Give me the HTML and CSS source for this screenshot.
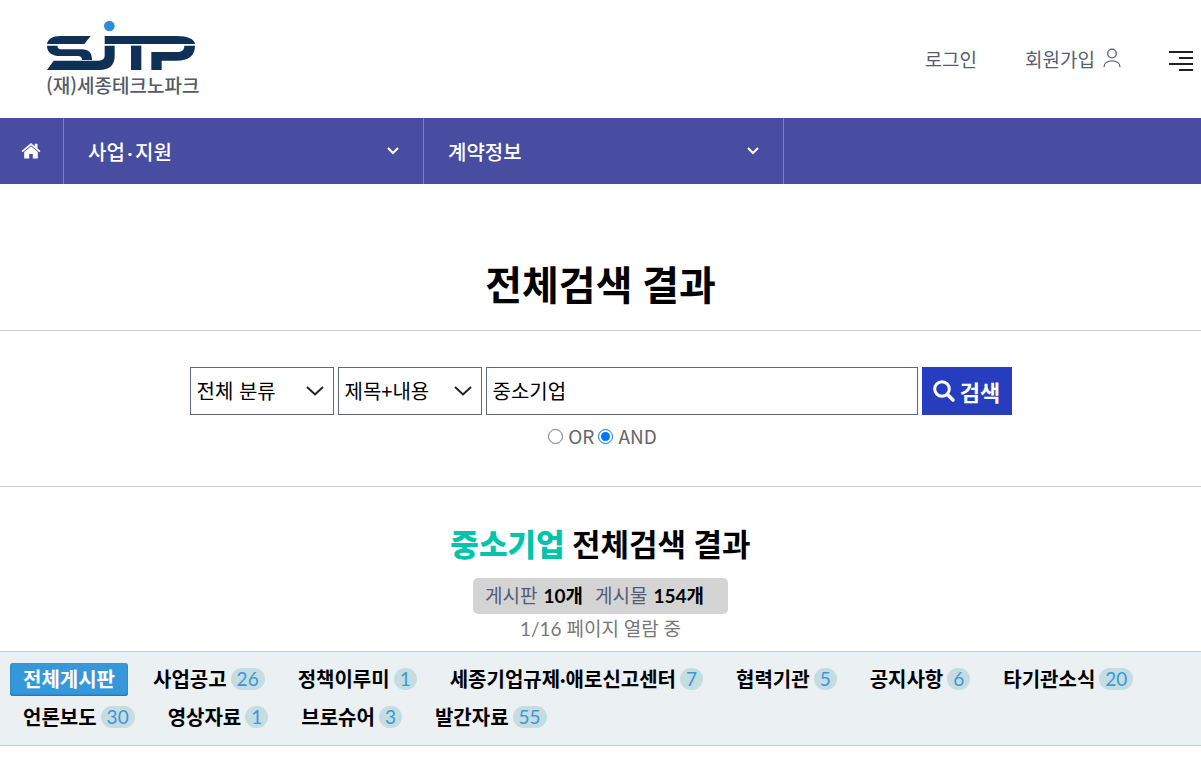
FILE: index.html
```html
<!DOCTYPE html>
<html lang="ko">
  <head>
    <meta charset="UTF-8" />
    <meta name="viewport" content="width=device-width, initial-scale=1.0" />
    <title>전체검색 결과</title>
    <link rel="stylesheet" href="styles.css">
  </head>
  <body>
    <header class="header">
      <a href="#" class="logo">
        <svg class="logo_mark" viewBox="48 30 450 150" aria-hidden="true">
          <circle cx="238" cy="48" r="16" fill="#2a8fd4" />
          <g fill="#0f3057">
            <path d="M182 78H90C68 78 53 87 51 102H163Z" />
            <path d="M51 107H82C82 114 87 118 96 118H155C176 118 186 128 186 150H156C156 142 152 138 144 138H92C66 138 51 127 51 107Z" />
            <path d="M224 78H440C474 78 493 87 495 102H224Z" />
            <path d="M224 107H254V138C254 166 238 180 208 180H51L71 152H205C218 152 224 147 224 136Z" />
            <path d="M303 107H334V180H303Z" />
            <path d="M463 107H495C495 137 475 152 440 152H395V180H364V126H440C456 126 463 120 463 107Z" />
          </g>
        </svg>
        <span class="logo_text">(재)세종테크노파크</span>
      </a>
      <div class="util">
        <a href="#">로그인</a>
        <a href="#" class="join">
          회원가입
          <svg width="18" height="20" viewBox="0 0 18 20" fill="none" stroke="#555e70" stroke-width="1.3" aria-hidden="true">
            <circle cx="9" cy="5.5" r="4.3" />
            <path d="M1 19C1 15 4.5 12.800 9 12.800S17 15 17 19" />
          </svg>
        </a>
        <button type="button" class="menu_btn" aria-label="전체메뉴">
          <svg width="24" height="22" viewBox="0 0 24 22" stroke="#222" stroke-width="2" aria-hidden="true">
            <path d="M0 2H24M10 8H24M0 14H24M10 20H24" />
          </svg>
        </button>
      </div>
    </header>

    <nav class="gnb">
      <a href="#" class="home" aria-label="홈">
        <svg width="20" height="16" viewBox="0 0 20 16" fill="#fff" aria-hidden="true">
          <path d="M10 0 0.500 8 1.600 9.300 10 2.300 18.400 9.300 19.500 8 16.500 5.500V0.800H13.800V3.200Z" />
          <path d="M10 3.200 3.200 9V15.500H8.200V11H11.800V15.500H16.800V9Z" />
        </svg>
      </a>
      <a href="#" class="depth">
        사업&thinsp;·&thinsp;지원
        <svg width="12" height="8" viewBox="0 0 12 8" fill="none" stroke="#fff" stroke-width="2" aria-hidden="true"><path d="M1 1 6 6 11 1" /></svg>
      </a>
      <a href="#" class="depth">
        계약정보
        <svg width="12" height="8" viewBox="0 0 12 8" fill="none" stroke="#fff" stroke-width="2" aria-hidden="true"><path d="M1 1 6 6 11 1" /></svg>
      </a>
    </nav>

    <main>
      <h1 class="title">전체검색 결과</h1>

      <form class="search">
        <div class="search_row">
          <span class="select_box">
            <select aria-label="분류">
              <option>전체 분류</option>
            </select>
            <svg width="18" height="10" viewBox="0 0 18 10" fill="none" stroke="#222" stroke-width="2" aria-hidden="true"><path d="M1 1 9 8.500 17 1" /></svg>
          </span>
          <span class="select_box">
            <select aria-label="검색조건">
              <option>제목+내용</option>
            </select>
            <svg width="18" height="10" viewBox="0 0 18 10" fill="none" stroke="#222" stroke-width="2" aria-hidden="true"><path d="M1 1 9 8.500 17 1" /></svg>
          </span>
          <input type="text" class="keyword" value="중소기업" aria-label="검색어">
          <button type="submit" class="search_btn">
            <svg width="22" height="22" viewBox="0 0 22 22" fill="none" stroke="#fff" aria-hidden="true">
              <circle cx="9" cy="9" r="7.300" stroke-width="3" />
              <path d="M14.500 14.500 20 20" stroke-width="3.500" stroke-linecap="round" />
            </svg>
            검색
          </button>
        </div>
        <div class="radio_row">
          <input type="radio" name="sop" id="sop_or"><label for="sop_or">OR</label>
          <input type="radio" name="sop" id="sop_and" checked><label for="sop_and">AND</label>
        </div>
      </form>

      <section class="result">
        <h2><strong>중소기업</strong> 전체검색 결과</h2>
        <dl class="count">
          <dt>게시판</dt>
          <dd>10개</dd>
          <dt>게시물</dt>
          <dd>154개</dd>
        </dl>
        <p class="page">1/16 페이지 열람 중</p>
      </section>

      <ul class="tabs">
        <li><a href="#" class="on">전체게시판</a></li>
        <li><a href="#">사업공고<span class="cnt">26</span></a></li>
        <li><a href="#">정책이루미<span class="cnt">1</span></a></li>
        <li><a href="#">세종기업규제·애로신고센터<span class="cnt">7</span></a></li>
        <li><a href="#">협력기관<span class="cnt">5</span></a></li>
        <li><a href="#">공지사항<span class="cnt">6</span></a></li>
        <li><a href="#">타기관소식<span class="cnt">20</span></a></li>
        <li><a href="#">언론보도<span class="cnt">30</span></a></li>
        <li><a href="#">영상자료<span class="cnt">1</span></a></li>
        <li><a href="#">브로슈어<span class="cnt">3</span></a></li>
        <li><a href="#">발간자료<span class="cnt">55</span></a></li>
      </ul>
    </main>
  </body>
</html>
```
FILE: styles.css
```css
* {
  box-sizing: border-box;
}
body {
  margin: 0;
  background: #fff;
  color: #000;
  font-family: Lato, "Noto Sans CJK KR", sans-serif;
  font-size: 20px;
}
a {
  color: inherit;
  text-decoration: none;
}
svg {
  flex-shrink: 0;
}

/* header */
.header {
  display: flex;
  justify-content: space-between;
  height: 118px;
  padding: 20px 8px 0 46px;
}
.logo {
  display: flex;
  flex-direction: column;
}
.logo_mark {
  width: 150px;
  height: 50px;
}
.logo_text {
  color: #535c66;
  font-family: "Noto Sans CJK KR", sans-serif;
  font-size: 19px;
  font-weight: 500;
  line-height: 30px;
  white-space: nowrap;
}
.util {
  display: flex;
  align-items: center;
  gap: 48px;
  height: 76px;
  color: #555e70;
  font-size: 19px;
}
.join {
  display: flex;
  align-items: center;
  gap: 8px;
}
.menu_btn {
  display: flex;
  padding: 5px 0 0;
  border: 0;
  background: none;
}

/* breadcrumb */
.gnb {
  display: flex;
  height: 66px;
  background: #484da2;
  color: #fff;
  font-weight: 500;
}
.home {
  display: flex;
  align-items: center;
  justify-content: center;
  width: 64px;
  padding-right: 2px;
  border-right: 1px solid #7d81be;
}
.depth {
  display: flex;
  align-items: center;
  justify-content: space-between;
  width: 360px;
  padding: 0 24px;
  border-right: 1px solid #7d81be;
}

/* search form */
.title {
  margin: 0;
  padding: 72px 0 16px;
  border-bottom: 1px solid #ccc;
  font-size: 40px;
  line-height: 58px;
  text-align: center;
}
.search {
  padding: 36px 0 31px;
  border-bottom: 1px solid #ccc;
}
.search_row {
  display: flex;
  justify-content: center;
  gap: 4px;
}
.select_box {
  display: grid;
  align-items: center;
  width: 144px;
}
.select_box select,
.select_box svg {
  grid-area: 1 / 1;
}
.select_box svg {
  justify-self: end;
  margin-right: 10px;
  pointer-events: none;
}
.select_box select,
.keyword {
  width: 100%;
  height: 48px;
  padding: 0 6px 2px;
  border: 1px solid #606582;
  border-radius: 0;
  background: #fff;
  color: #000;
  font-family: "Noto Sans CJK KR", sans-serif;
  font-size: 20px;
  appearance: none;
}
.keyword {
  max-width: 432px;
}
.search_btn {
  display: flex;
  align-items: center;
  justify-content: center;
  gap: 5px;
  width: 90px;
  height: 48px;
  padding: 0;
  border: 0;
  background: #253dbe;
  color: #fff;
  font-family: inherit;
  font-size: 22px;
  font-weight: 700;
  white-space: nowrap;
}
.radio_row {
  display: flex;
  align-items: center;
  justify-content: center;
  height: 40px;
  color: #666;
  font-family: "Noto Sans CJK KR", sans-serif;
  font-size: 19px;
}
.radio_row input {
  width: 15px;
  height: 15px;
  margin: 2px 5px 0 4px;
}

/* result summary */
.result {
  display: flex;
  flex-direction: column;
  align-items: center;
  padding-top: 35px;
}
.result h2 {
  margin: 0;
  font-size: 31px;
  line-height: 45px;
}
.result h2 strong {
  color: #00c4ac;
}
.count {
  display: flex;
  align-items: center;
  height: 36px;
  margin: 11px 0 0;
  padding: 0 12px 4px;
  border-radius: 5px;
  background: #d4d4d4;
  font-size: 19px;
}
.count dt {
  margin-right: 6px;
  color: #555a78;
}
.count dd {
  margin: 0 12px 0 0;
  font-weight: 700;
}
.page {
  margin: 0;
  color: #777;
  font-size: 19px;
  line-height: 30px;
}

/* board tabs */
.tabs {
  display: flex;
  flex-wrap: wrap;
  gap: 5px 12px;
  margin: 7px 0 0;
  padding: 11px 10px;
  border-top: 1px solid #bbd4d4;
  border-bottom: 1px solid #bbd4d4;
  background: #ebf0f3;
  list-style: none;
}
.tabs a {
  display: flex;
  align-items: center;
  height: 33px;
  padding: 0 8px 2px 13px;
  font-weight: 700;
  white-space: nowrap;
}
.tabs .on {
  padding-right: 13px;
  border-radius: 3px;
  background: #3598db;
  box-shadow: inset 0 -1px 2px #1b70ad;
  color: #fff;
}
.cnt {
  margin-left: 4px;
  padding: 0 6px;
  border-radius: 11px;
  background: #c5dce0;
  color: #3a97dc;
  font-size: 19px;
  font-weight: 400;
  line-height: 22px;
}
```
